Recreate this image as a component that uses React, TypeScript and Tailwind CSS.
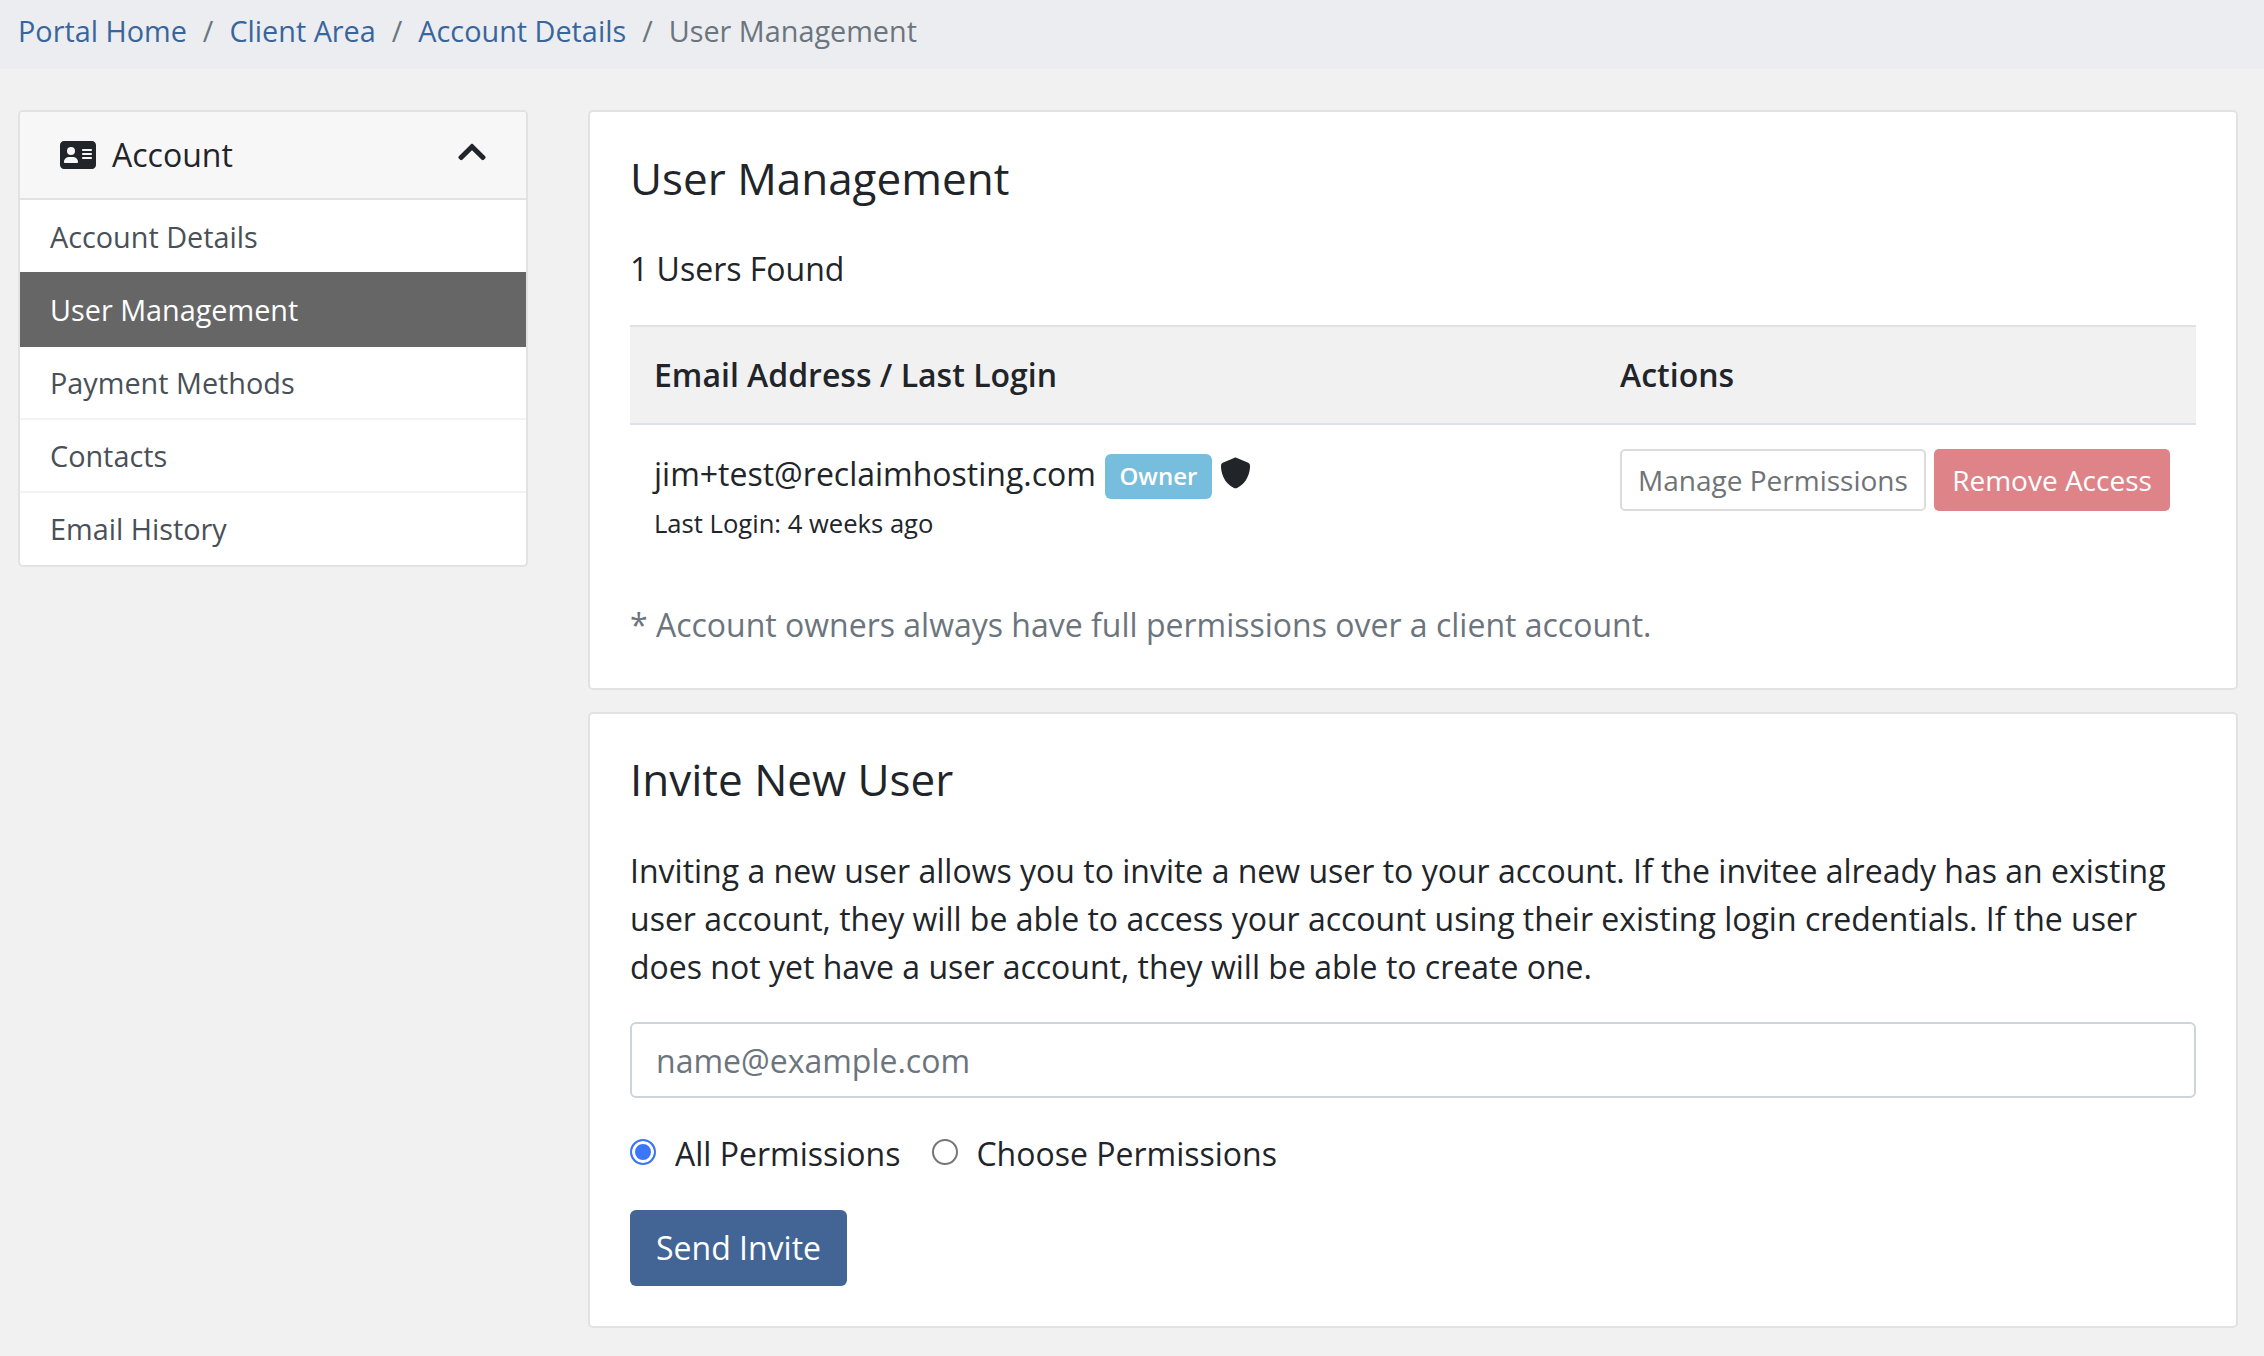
import { FaChevronUp } from "react-icons/fa";
import { FaAddressCard, FaShield } from "react-icons/fa6";

const sideLinks = [
    { label: "Account Details", row: "h-[72px] pt-[2px] text-[#495057]" },
    { label: "User Management", row: "h-[75px] bg-[#666666] text-white" },
    { label: "Payment Methods", row: "h-[73px] text-[#495057] border-b-2 border-[#f3f3f3]" },
    { label: "Contacts", row: "h-[73px] text-[#495057] border-b-2 border-[#f3f3f3]" },
    { label: "Email History", row: "h-[72px] text-[#495057]" },
];

const Sidebar = () => (
    <div className="w-[510px] shrink-0 self-start rounded-[5px] border-2 border-[#e2e2e2] bg-white overflow-hidden">
        <div className="h-[88px] flex items-center justify-between pl-[40px] pr-[40px] bg-[#f7f7f7] border-b-2 border-[#e2e2e2]">
            <div className="flex items-center gap-[16px] text-[#212529] text-[32px]">
                <FaAddressCard className="w-[36px] h-[32px]" />
                <span>Account</span>
            </div>
            <FaChevronUp className="w-[28px] h-[32px] text-[#212529] mb-[6px]" />
        </div>
        {sideLinks.map((link) => (
            <div key={link.label} className={`flex items-center pl-[30px] text-[28.8px] ${link.row}`}>
                {link.label}
            </div>
        ))}
    </div>
);

const Card = ({ children, className }: { children: React.ReactNode; className: string }) => (
    <div className={`rounded-[5px] border-2 border-[#e2e2e2] bg-white px-[40px] ${className}`}>{children}</div>
);

const radioClass =
    "m-0 w-[26px] h-[26px] appearance-none rounded-full border-2 border-[#767676] bg-white checked:border-[#3a76f7] checked:bg-[#3a76f7] checked:shadow-[inset_0_0_0_3px_white]";

export default function App() {
    return (
        <div className="min-h-[1356px] bg-[#f1f1f1] font-['Open_Sans',sans-serif] text-[#212529]">
            {/* Breadcrumb */}
            <div className="h-[69px] bg-[#ebedf1] flex items-center gap-[16px] pl-[18px] pb-[8px] text-[28.8px] text-[#6c757d]">
                <a className="text-[#38659c]">Portal Home</a>
                <span>/</span>
                <a className="text-[#38659c]">Client Area</a>
                <span>/</span>
                <a className="text-[#38659c]">Account Details</a>
                <span>/</span>
                <span>User Management</span>
            </div>

            <div className="flex gap-[60px] pt-[41px] pl-[18px] pr-[26px]">
                <Sidebar />

                <div className="flex-1 flex flex-col gap-[22px]">
                    <Card className="h-[580px] pt-[36px]">
                        <h3 className="text-[44px] leading-[60px]">User Management</h3>
                        <p className="mt-[39px] text-[32px] leading-[44px]">1 Users Found</p>

                        <div className="mt-[34px] flex h-[100px] items-center bg-[#f1f1f1] border-y-2 border-[#dee2e6] text-[32px] font-semibold">
                            <div className="w-[990px] pl-[24px]">Email Address / Last Login</div>
                            <div>Actions</div>
                        </div>

                        <div className="flex pt-[24px] h-[148px]">
                            <div className="w-[990px] pl-[24px] pt-[4px]">
                                <div className="flex items-center h-[46px]">
                                    <span className="text-[32px] mb-[5px]">jim+test@reclaimhosting.com</span>
                                    <span className="ml-[9px] h-[45px] px-[14.5px] flex items-center rounded-[6px] bg-[#77bddd] text-white text-[24px] font-semibold">
                                        Owner
                                    </span>
                                    <FaShield className="ml-[8px] mb-[6px] w-[31px] h-[32px] text-[#212529]" />
                                </div>
                                <div className="mt-[5px] text-[25.6px] leading-[40px]">Last Login: 4 weeks ago</div>
                            </div>
                            <div className="flex gap-[8px] items-start">
                                <button className="w-[306px] h-[62px] rounded-[5px] border-2 border-[#dcdcdc] bg-white text-[28px] text-[#6f7376]">
                                    Manage Permissions
                                </button>
                                <button className="w-[236px] h-[62px] rounded-[5px] bg-[#de8489] text-[28px] text-white">
                                    Remove Access
                                </button>
                            </div>
                        </div>

                        <p className="mt-[30px] text-[32px] leading-[44px] text-[#6c757d]">
                            * Account owners always have full permissions over a client account.
                        </p>
                    </Card>

                    <Card className="h-[616px] pt-[35px]">
                        <h3 className="text-[44px] leading-[60px]">Invite New User</h3>
                        <p className="mt-[38px] text-[32px] leading-[48px]">
                            Inviting a new user allows you to invite a new user to your account. If the invitee already has an
                            existing user account, they will be able to access your account using their existing login credentials.
                            If the user does not yet have a user account, they will be able to create one.
                        </p>
                        <input
                            placeholder="name@example.com"
                            className="mt-[31px] block w-full h-[76px] rounded-[6px] border-2 border-[#ced4da] bg-white px-[24px] text-[32px] placeholder:text-[#6c757d] outline-none"
                        />
                        <div className="mt-[41px] flex items-center h-[26px] text-[32px]">
                            <label className="flex items-center">
                                <input type="radio" name="perm" defaultChecked className={radioClass} />
                                <span className="ml-[19px] pt-[4px]">All Permissions</span>
                            </label>
                            <label className="flex items-center ml-[32px]">
                                <input type="radio" name="perm" className={radioClass} />
                                <span className="ml-[18px] pt-[4px]">Choose Permissions</span>
                            </label>
                        </div>
                        <button className="mt-[45px] block w-[217px] h-[76px] rounded-[6px] bg-[#426595] text-white text-[32px]">
                            Send Invite
                        </button>
                    </Card>
                </div>
            </div>
        </div>
    );
}
